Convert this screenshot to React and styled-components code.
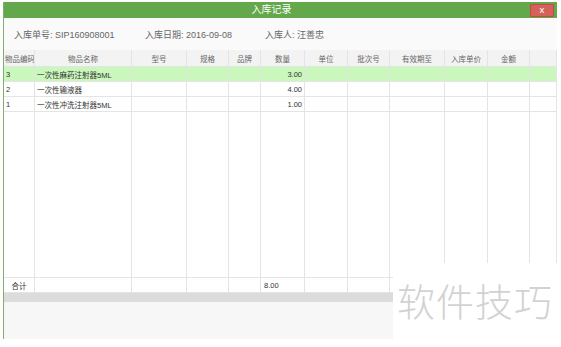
import styled, { createGlobalStyle } from "styled-components";

const GlobalStyle = createGlobalStyle`
  html, body {
    margin: 0;
    padding: 0;
    background: #ffffff;
    font-family: "Liberation Sans", "Noto Sans CJK SC", sans-serif;
    -webkit-font-smoothing: antialiased;
  }
`;

const COLS = "31px 97px 55px 42px 32px 44px 43px 42px 55px 43px 42px 27px";

const columns = [
  { title: "物品编码", align: "left" },
  { title: "物品名称", align: "center" },
  { title: "型号", align: "center" },
  { title: "规格", align: "center" },
  { title: "品牌", align: "center" },
  { title: "数量", align: "center" },
  { title: "单位", align: "center" },
  { title: "批次号", align: "center" },
  { title: "有效期至", align: "center" },
  { title: "入库单价", align: "center" },
  { title: "金额", align: "center" },
  { title: "", align: "center" },
];

const rows = [
  { code: "3", name: "一次性麻药注射器5ML", qty: "3.00", active: true },
  { code: "2", name: "一次性输液器", qty: "4.00" },
  { code: "1", name: "一次性冲洗注射器5ML", qty: "1.00" },
];

const Page = styled.div`
  position: relative;
  width: 561px;
  height: 347px;
  overflow: hidden;
`;

const Window = styled.div`
  margin: 2px 4px 0 3px;
  height: 337px;
  border-left: 1px solid #7fae6f;
  display: flex;
  flex-direction: column;
  background: #fff;
`;

const TitleBar = styled.div`
  height: 16px;
  background: #63a94c;
  display: grid;
  grid-template-columns: 1fr auto 1fr;
  align-items: center;
  color: #fff;
  font-size: 10px;
`;

const Title = styled.div`
  grid-column: 2;
  line-height: 16px;
  margin-right: 18px;
`;

const CloseButton = styled.div`
  justify-self: end;
  margin-right: 3px;
  width: 22px;
  height: 11px;
  background: #d6615a;
  border: 1px solid #c24c45;
  border-radius: 1px;
  color: #fff;
  font-size: 9px;
  line-height: 10px;
  text-align: center;
  font-family: "DejaVu Sans", sans-serif;
`;

const InfoBar = styled.div`
  height: 32px;
  display: flex;
  align-items: center;
  padding-left: 10px;
  background: #fafafa;
  font-size: 9px;
  color: #666;
`;

const InfoItem = styled.span`
  width: ${(p) => p.$w}px;
  white-space: nowrap;
`;

const Table = styled.div`
  display: flex;
  flex-direction: column;
  height: 243px;
`;

const Row = styled.div`
  display: grid;
  grid-template-columns: ${COLS};
  height: ${(p) => p.$h}px;
  background: ${(p) => (p.$active ? "#c9f7bc" : p.$head ? "#f3f3f3" : "#fff")};
  border-bottom: 1px solid #e4e4e4;
  box-sizing: border-box;
  font-size: ${(p) => (p.$head ? 7.5 : 7.5)}px;
  color: ${(p) => (p.$head ? "#666" : "#333")};
`;

const Cell = styled.div`
  border-right: 1px solid #e4e4e4;
  display: flex;
  align-items: center;
  justify-content: ${(p) =>
    p.$align === "right" ? "flex-end" : p.$align === "left" ? "flex-start" : "center"};
  padding: 0 ${(p) => (p.$pad ?? 2)}px;
  white-space: nowrap;
  overflow: hidden;
`;

const ScrollBand = styled.div`
  height: 9px;
  background: #dcdcdc;
`;

const Bottom = styled.div`
  flex: 1;
  background: #f7f7f7;
`;

const Watermark = styled.div`
  position: absolute;
  left: 393px;
  top: 263px;
  width: 168px;
  height: 84px;
  background: #fff;
  color: #d2d2d2;
  font-size: 38px;
  line-height: 1;
  padding: 18px 0 0 4px;
  box-sizing: border-box;
  letter-spacing: 1px;
  font-family: "Noto Sans CJK SC", sans-serif;
  font-weight: 300;
`;

function DataRow({ row }) {
  return (
    <Row $h={15} $active={row.active}>
      <Cell $align="left">{row.code}</Cell>
      <Cell $align="left">{row.name}</Cell>
      <Cell />
      <Cell />
      <Cell />
      <Cell $align="right">{row.qty}</Cell>
      <Cell />
      <Cell />
      <Cell />
      <Cell />
      <Cell />
      <Cell />
    </Row>
  );
}

export default function App() {
  return (
    <Page>
      <GlobalStyle />
      <Window>
        <TitleBar>
          <Title>入库记录</Title>
          <CloseButton>x</CloseButton>
        </TitleBar>
        <InfoBar>
          <InfoItem $w={131}>入库单号: SIP160908001</InfoItem>
          <InfoItem $w={120}>入库日期: 2016-09-08</InfoItem>
          <InfoItem $w={100}>入库人: 汪善忠</InfoItem>
        </InfoBar>
        <Table>
          <Row $h={17} $head>
            {columns.map((c, i) => (
              <Cell key={i} $align={c.align} $pad={i === 0 ? 1 : 2}>
                {c.title}
              </Cell>
            ))}
          </Row>
          {rows.map((r) => (
            <DataRow key={r.code} row={r} />
          ))}
          <Row $h={166}>
            {columns.map((c, i) => (
              <Cell key={i} />
            ))}
          </Row>
          <Row $h={15}>
            <Cell $align="center">合计</Cell>
            <Cell />
            <Cell />
            <Cell />
            <Cell />
            <Cell $align="left" $pad={3}>8.00</Cell>
            <Cell />
            <Cell />
            <Cell />
            <Cell />
            <Cell />
            <Cell />
          </Row>
        </Table>
        <ScrollBand />
        <Bottom />
      </Window>
      <Watermark>软件技巧</Watermark>
    </Page>
  );
}
